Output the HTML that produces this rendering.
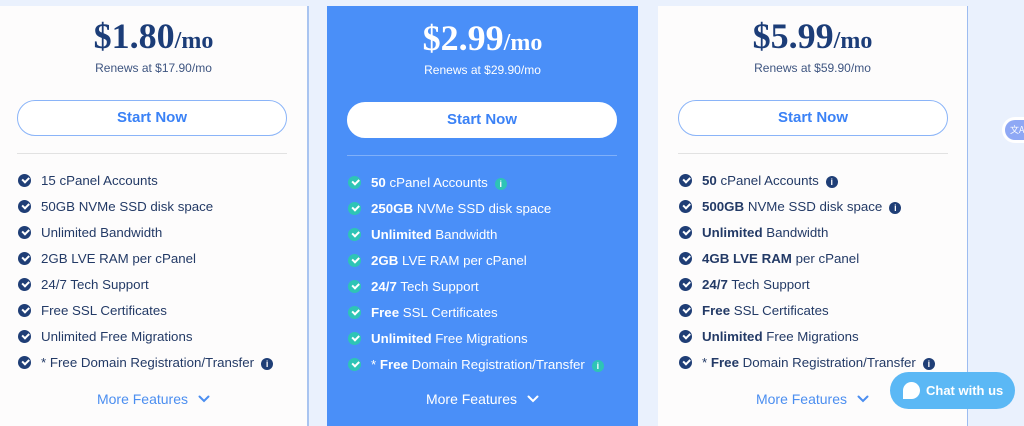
<!DOCTYPE html><html><head><style>
body{margin:0;width:1024px;height:416px;background:#eaf1fd;font-family:"Liberation Sans",sans-serif;overflow:hidden;position:relative}
.card{position:absolute;top:6px;height:420px;background:#fdfcfc;border-right:2px solid #a9c4f0;box-sizing:border-box}
.blue{background:#4a8ff8;border:none}
.price{position:absolute;left:0;right:0;text-align:center;font-family:"Liberation Serif",serif;font-weight:bold;color:#1c3d78;font-size:36px}
.price span{font-size:24px}
.ren{position:absolute;left:0;right:0;text-align:center;font-size:12px;color:#3e5580}
.btn{position:absolute;left:17px;width:270px;height:36px;border:1.5px solid #8ab4f8;border-radius:19px;box-sizing:border-box;text-align:center;line-height:33px;color:#3b82f6;font-weight:bold;font-size:15px;background:#fff}
.div{position:absolute;left:17px;width:270px;height:1px;background:#e2e2e2}
ul{position:absolute;left:17px;margin:0;padding:0;list-style:none;font-size:13.3px;color:#233a66}
li{height:26px;line-height:16px;position:relative;padding-left:24px}
li:before{content:"";position:absolute;left:1px;top:1px;width:13px;height:13px;border-radius:50%;background:#1f3e76}
li:after{content:"";position:absolute;left:4.5px;top:4px;width:5px;height:2.5px;border-left:2px solid #fff;border-bottom:2px solid #fff;transform:rotate(-45deg)}
.blue ul{color:#fff}
.blue li:before{background:#2ec4b6}
.i{display:inline-block;width:12px;height:12px;border-radius:50%;background:#1f3e76;color:#fff;font-size:9px;line-height:12px;text-align:center;font-weight:bold;margin-left:7px;vertical-align:0}
.blue .i{background:#2ec4b6}
.more{position:absolute;left:0;right:0;top:385px;text-align:center;font-size:14px;color:#4b8ef0}
.more svg{vertical-align:1px;margin-left:10px}
.blue .more{color:#fff}
b{font-weight:bold}
</style></head><body>
<div class="card" style="left:0;width:309px">
<div class="price" style="top:9px">$1.80<span>/mo</span></div>
<div class="ren" style="top:55px">Renews at $17.90/mo</div>
<div class="btn" style="top:94px">Start Now</div>
<div class="div" style="top:147px"></div>
<ul style="top:167px"><li>15 cPanel Accounts</li><li>50GB NVMe SSD disk space</li><li>Unlimited Bandwidth</li><li>2GB LVE RAM per cPanel</li><li>24/7 Tech Support</li><li>Free SSL Certificates</li><li>Unlimited Free Migrations</li><li>* Free Domain Registration/Transfer<span class="i">i</span></li></ul>
<div class="more">More Features<svg width="12" height="8" viewBox="0 0 12 8"><path d="M1.5 1.5L6 6l4.5-4.5" fill="none" stroke="currentColor" stroke-width="2" stroke-linecap="round"/></svg></div>
</div>
<div class="card blue" style="left:327px;width:311px">
<div class="price" style="top:11px;color:#fff">$2.99<span>/mo</span></div>
<div class="ren" style="top:57px;color:#fff">Renews at $29.90/mo</div>
<div class="btn" style="top:96px;left:20px;border-color:#fff">Start Now</div>
<div class="div" style="top:149px;left:20px;background:#7fb0fa"></div>
<ul style="top:169px;left:20px"><li><b>50</b> cPanel Accounts<span class="i">i</span></li><li><b>250GB</b> NVMe SSD disk space</li><li><b>Unlimited</b> Bandwidth</li><li><b>2GB</b> LVE RAM per cPanel</li><li><b>24/7</b> Tech Support</li><li><b>Free</b> SSL Certificates</li><li><b>Unlimited</b> Free Migrations</li><li>* <b>Free</b> Domain Registration/Transfer<span class="i">i</span></li></ul>
<div class="more">More Features<svg width="12" height="8" viewBox="0 0 12 8"><path d="M1.5 1.5L6 6l4.5-4.5" fill="none" stroke="currentColor" stroke-width="2" stroke-linecap="round"/></svg></div>
</div>
<div class="card" style="left:658px;width:310px;border-right:1px solid #9dbcf0">
<div class="price" style="top:9px">$5.99<span>/mo</span></div>
<div class="ren" style="top:55px">Renews at $59.90/mo</div>
<div class="btn" style="top:94px;left:20px">Start Now</div>
<div class="div" style="top:147px;left:20px"></div>
<ul style="top:167px;left:20px"><li><b>50</b> cPanel Accounts<span class="i">i</span></li><li><b>500GB</b> NVMe SSD disk space<span class="i">i</span></li><li><b>Unlimited</b> Bandwidth</li><li><b>4GB LVE RAM</b> per cPanel</li><li><b>24/7</b> Tech Support</li><li><b>Free</b> SSL Certificates</li><li><b>Unlimited</b> Free Migrations</li><li>* <b>Free</b> Domain Registration/Transfer<span class="i">i</span></li></ul>
<div class="more">More Features<svg width="12" height="8" viewBox="0 0 12 8"><path d="M1.5 1.5L6 6l4.5-4.5" fill="none" stroke="currentColor" stroke-width="2" stroke-linecap="round"/></svg></div>
</div>
<div style="position:absolute;left:1002px;top:117px;width:40px;height:26px;border-radius:13px;background:#fff"></div>
<div style="position:absolute;left:1005px;top:120px;width:30px;height:20px;border-radius:10px;background:#8ea8f5;color:#fff;font-size:9px;line-height:20px;padding-left:5px;box-sizing:border-box;font-family:'Noto Sans CJK SC',sans-serif">文A</div>
<div style="position:absolute;left:890px;top:372px;width:125px;height:37px;border-radius:19px;background:#5bb8f5;color:#fff;font-weight:bold;font-size:13px;line-height:37px"><span style="position:absolute;left:13px;top:10px;width:17px;height:17px;background:#fff;border-radius:50% 50% 50% 0"></span><span style="position:absolute;left:36px">Chat with us</span></div>
</body></html>
